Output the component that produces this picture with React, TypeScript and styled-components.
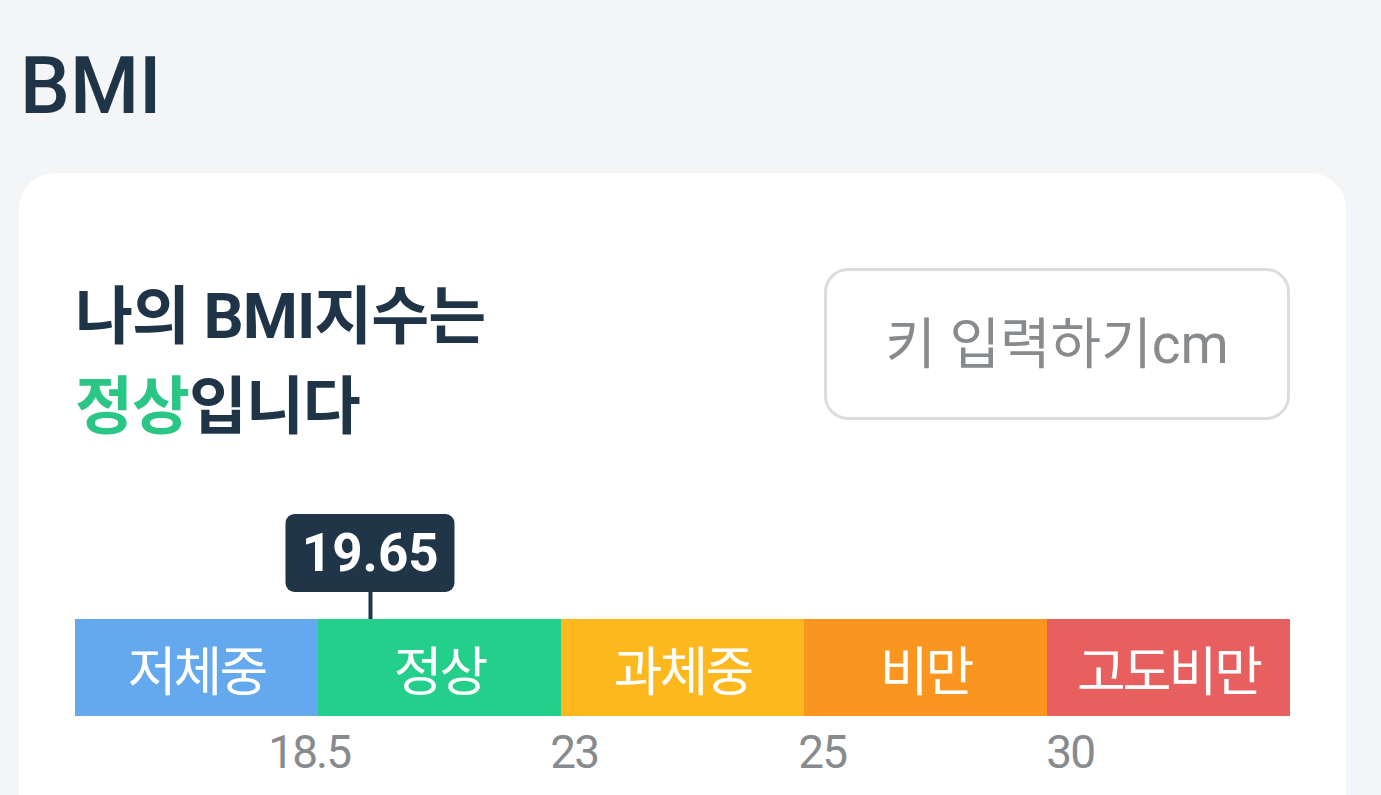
import styled, { createGlobalStyle } from "styled-components";

const GlobalStyle = createGlobalStyle`
  body {
    margin: 0;
    background: #f4f5f7;
    font-family: "Roboto", "Noto Sans CJK KR", sans-serif;
    color: #1f3447;
  }
`

const Page = styled.div`
  padding: 47px 35px 0 19px;
  overflow: hidden;
`

const Title = styled.h1`
  margin: 0 0 48px 1px;
  font-size: 79px;
  line-height: 78px;
  font-weight: 500;
`

const Card = styled.section`
  background: #ffffff;
  border-radius: 36px;
  padding: 95px 56px 60px;
`

const Header = styled.div`
  display: flex;
  justify-content: space-between;
  align-items: flex-start;
`

const Heading = styled.h2`
  margin: 4px 0 0;
  font-size: 63px;
  line-height: 90px;
  font-weight: 700;
  letter-spacing: -1px;
`

const Status = styled.span`
  color: #2ac685;
`

const HeightInput = styled.input`
  box-sizing: border-box;
  width: 466px;
  height: 152px;
  border: 3px solid #dcdddf;
  border-radius: 24px;
  background: #fff;
  font-family: inherit;
  font-size: 55px;
  text-align: center;
  color: #1f3447;
  outline: none;

  &::placeholder {
    color: #888b8e;
  }
`

const MarkerTrack = styled.div`
  margin-top: 62px;
`

const Marker = styled.div`
  display: flex;
  flex-direction: column;
  align-items: center;
  width: max-content;
  transform: translateX(-50%);
`

const Bubble = styled.div`
  height: 78px;
  padding: 0 16px;
  border-radius: 9px;
  background: #213548;
  color: #fff;
  font-size: 53px;
  font-weight: 700;
  line-height: 78px;
`

const Stem = styled.div`
  width: 4px;
  height: 27px;
  background: #213548;
`

const Bar = styled.div`
  display: grid;
  grid-template-columns: repeat(5, 1fr);
  height: 97px;
`

const Segment = styled.div<{ $color: string }>`
  display: flex;
  align-items: center;
  justify-content: center;
  background: ${(p) => p.$color};
  color: #fff;
  font-size: 53px;
  font-weight: 400;
  letter-spacing: -3px;
`

const Ticks = styled.div`
  display: grid;
  grid-template-columns: repeat(4, 248px);
  margin-top: 10px;
  padding-left: 27px;
`

const Tick = styled.span`
  text-align: right;
  font-size: 46px;
  line-height: 52px;
  color: #888b8e;
  letter-spacing: -2px;
`

const segments = [
  { label: "저체중", color: "#64a9ee" },
  { label: "정상", color: "#23cf8b" },
  { label: "과체중", color: "#fdb81e" },
  { label: "비만", color: "#fa951f" },
  { label: "고도비만", color: "#e85f5f" },
]

const ticks = ["18.5", "23", "25", "30"]

export default function App() {
  const bmi = 19.65
  const markerPos = 24.3

  return (
    <>
      <GlobalStyle />
      <Page>
        <Title>BMI</Title>
        <Card>
          <Header>
            <Heading>
              나의 BMI지수는
              <br />
              <Status>정상</Status>입니다
            </Heading>
            <HeightInput placeholder="키 입력하기cm" />
          </Header>
          <MarkerTrack>
            <Marker style={{ marginLeft: `${markerPos}%` }}>
              <Bubble>{bmi}</Bubble>
              <Stem />
            </Marker>
          </MarkerTrack>
          <Bar>
            {segments.map((s) => (
              <Segment key={s.label} $color={s.color}>
                {s.label}
              </Segment>
            ))}
          </Bar>
          <Ticks>
            {ticks.map((t) => (
              <Tick key={t}>{t}</Tick>
            ))}
          </Ticks>
        </Card>
      </Page>
    </>
  )
}
